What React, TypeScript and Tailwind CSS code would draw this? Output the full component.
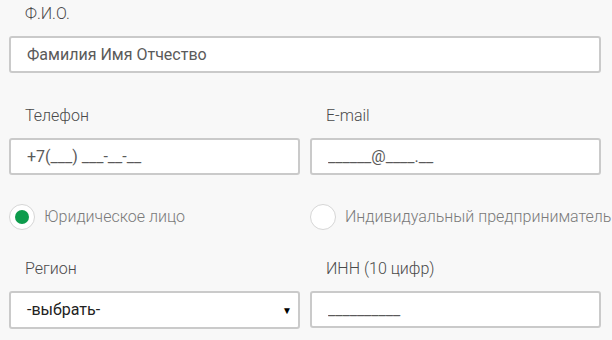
const font = { fontFamily: "Roboto, 'Noto Sans', sans-serif" };

const Label = ({ children }: { children: React.ReactNode }) => (
  <div className="h-[20px] whitespace-nowrap pl-[16px] text-[16px] font-light leading-[20px] text-[#4a4a4a]">{children}</div>
);

const TextInput = ({ placeholder }: { placeholder: string }) => (
  <input
    type="text"
    placeholder={placeholder}
    className="mt-[12px] box-border h-[37px] w-full rounded-[3px] border-2 border-[#cacaca] bg-white px-[16px] text-[16px] text-[#5a5a5a] outline-none placeholder:text-[#5a5a5a]"
  />
);

const Radio = ({ checked, label }: { checked?: boolean; label: string }) => (
  <label className="flex h-[26px] cursor-pointer items-center gap-[9px]">
    <span className="flex h-[26px] w-[26px] shrink-0 items-center justify-center rounded-full border border-[#d6d6d6] bg-white">
      {checked && <span className="h-[14px] w-[14px] rounded-full bg-[#0d9b4c]" />}
    </span>
    <span className="whitespace-nowrap text-[16px] font-light text-[#7a7a7a]">{label}</span>
  </label>
);

export default function App() {
  return (
    <div className="h-[340px] w-[612px] overflow-hidden bg-[#f8f8f8] pl-[9px] pr-[11px] pt-[4px]" style={font}>
      <div>
        <Label>Ф.И.О.</Label>
        <TextInput placeholder="Фамилия Имя Отчество" />
      </div>

      <div className="mt-[33px] grid grid-cols-2 gap-x-[10px]">
        <div>
          <Label>Телефон</Label>
          <TextInput placeholder="+7(___) ___-__-__" />
        </div>
        <div>
          <Label>E-mail</Label>
          <TextInput placeholder="______@____.__" />
        </div>
      </div>

      <div className="mt-[29px] grid grid-cols-2 gap-x-[10px]">
        <Radio checked label="Юридическое лицо" />
        <Radio label="Индивидуальный предприниматель" />
      </div>

      <div className="mt-[29px] grid grid-cols-2 gap-x-[10px]">
        <div>
          <Label>Регион</Label>
          <div className="mt-[12px] box-border flex h-[38px] items-center justify-between rounded-[3px] border-2 border-[#cacaca] bg-white pl-[16px] pr-[6px] text-[16px] text-[#222]">
            <span>-выбрать-</span>
            <span className="text-[10px] text-black">▼</span>
          </div>
        </div>
        <div>
          <Label>ИНН (10 цифр)</Label>
          <TextInput placeholder="__________" />
        </div>
      </div>
    </div>
  );
}
